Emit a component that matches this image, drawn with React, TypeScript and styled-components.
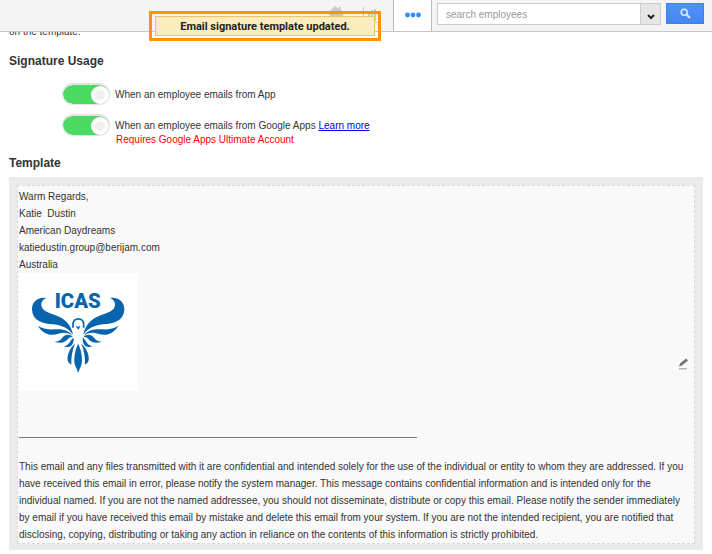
import React from "react";
import styled, { createGlobalStyle } from "styled-components";

const Global = createGlobalStyle`
  *, *::before { box-sizing: border-box; }
  body {
    margin: 0;
    background: #fff;
    color: #333;
    font: 10px/17px "Liberation Sans", Arial, sans-serif;
  }
`;

const Page = styled.div`
  position: relative;
`;

const Header = styled.header`
  display: flex;
  height: 32px;
  background: #f4f4f4;
  border-bottom: 1px solid #c8c8c8;
`;

const Nav = styled.nav`
  display: flex;
  flex: 1;
  justify-content: flex-end;
  gap: 18px;
  padding: 6px 13px 0 0;
`;

const NavButton = styled.button`
  display: flex;
  align-items: flex-start;
  height: 20px;
  padding: 0;
  border: 0;
  background: none;
  color: #c9c9c9;
`;

const MoreTab = styled.button`
  display: flex;
  align-items: center;
  justify-content: center;
  width: 39px;
  padding: 0 0 2px;
  border: 1px solid #bbb;
  border-width: 0 1px;
  background: #fff;
  color: #2d8cff;
`;

const Search = styled.form`
  display: flex;
  gap: 5px;
  height: 22px;
  margin: 3px 8px 0 5px;
`;

const SearchField = styled.div`
  display: flex;
  width: 224px;
  border: 1px solid #ccc;
  background: #fff;
`;

const SearchInput = styled.input`
  flex: 1;
  min-width: 0;
  padding: 0 8px;
  border: 0;
  background: none;
  font: 10px "Liberation Sans", Arial, sans-serif;
  &::placeholder { color: #999; }
`;

const SearchOptions = styled.button`
  display: flex;
  align-items: center;
  justify-content: center;
  width: 20px;
  padding: 6px 0 0;
  border: 0;
  border-left: 1px solid #ccc;
  background: #e6e6e6;
  color: #222;
`;

const SearchButton = styled.button`
  display: flex;
  align-items: center;
  justify-content: center;
  width: 38px;
  height: 21px;
  padding: 0;
  border: 1px solid #3b80ee;
  background: linear-gradient(#4d90fe, #4787ed);
  color: #dfeaff;
`;

const Toast = styled.div`
  position: absolute;
  top: 11px;
  left: 149px;
  padding: 2px 3px;
  border: 3px solid #ff9500;
`;

const ToastText = styled.div`
  width: 220px;
  padding-top: 1px;
  border: 1px solid #efc36a;
  background: #f9edbe;
  color: #222;
  font: bold 11px/17px Roboto, "Liberation Sans", sans-serif;
  text-align: center;
`;

const Content = styled.main`
  padding: 0 9px 4px;
`;

const Intro = styled.p`
  display: flex;
  align-items: flex-end;
  height: 8px;
  margin: 0;
  overflow: hidden;
`;

const Heading = styled.h2<{ $top: number }>`
  margin: ${(p) => p.$top}px 0 0;
  font-size: 12px;
  line-height: 18px;
`;

const Option = styled.div<{ $top: number }>`
  display: flex;
  gap: 5px;
  margin: ${(p) => p.$top}px 0 0 53px;
`;

const Toggle = styled.input`
  appearance: none;
  display: flex;
  align-items: center;
  justify-content: flex-end;
  width: 48px;
  height: 22px;
  margin: 0;
  border: 1px solid #e4e4e4;
  border-top-width: 2px;
  border-radius: 11px;
  background: #4cd964;
  background-clip: padding-box;
  &::before {
    content: "";
    width: 18px;
    height: 18px;
    border: 4px solid #fff;
    border-radius: 50%;
    background: #f0f0f0;
    box-shadow: 0 0 1px #bbb;
  }
`;

const OptionText = styled.div`
  padding-top: 5px;
  line-height: 14px;
`;

const Link = styled.a`
  color: #00e;
`;

const Warning = styled.div`
  padding-left: 1px;
  color: #f00;
`;

const Frame = styled.section`
  margin-top: 5px;
  padding: 8px 8px 6px;
  background: #ebebeb;
`;

const Editor = styled.div`
  position: relative;
  padding: 2px 4px 0 1px;
  border: 1px dashed #d8d8d8;
  background: #f9f9f9;
`;

const Line = styled.div`
  white-space: pre;
`;

const Logo = styled.svg`
  display: block;
  width: 118px;
  height: 118px;
  background: #fff;
`;

const Rule = styled.hr`
  width: 398px;
  margin: 46px 0 20px;
  border: 0;
  border-top: 1px solid #777;
`;

const Disclaimer = styled.p`
  max-width: 668px;
  margin: 0;
`;

const EditButton = styled.button`
  position: absolute;
  top: 50%;
  right: 4px;
  transform: translateY(-50%);
  display: block;
  padding: 0;
  border: 0;
  background: none;
`;

const BirdHalf = ({ mirrored = false }: { mirrored?: boolean }) => (
  <g transform={mirrored ? "matrix(-1 0 0 1 379 0)" : undefined}>
    <path d="M94 84C68 80 50 96 51 120C53 151 80 161 115 163C144 166 160 176 174 194C168 165 150 146 122 136C98 128 81 122 79 106C78 96 84 88 94 84Z" />
    <path d="M69 167C83 192 105 199 130 191C148 186 162 189 173 198C160 179 141 177 119 178C98 179 82 176 69 167Z" />
    <path d="M118 215C137 222 151 217 159 207C164 201 169 200 174 201C163 191 150 193 142 203C136 211 129 215 118 215Z" />
    <path d="M147 229C165 235 177 226 176 203C166 207 167 223 147 229Z" />
    <path d="M180 221C163 234 154 261 159 274C161 279 165 282 169 284C168 263 172 239 180 221Z" />
  </g>
);

export default function App() {
  return (
    <Page>
      <Global />
      <Header>
        <Nav>
          <NavButton aria-label="Home">
            <svg width="18" height="16" viewBox="0 0 18 16" fill="currentColor"><path d="M0 8 8 0l4 3V1h2v3l4 4-2 1v6H3V9z" /></svg>
          </NavButton>
          <NavButton aria-label="Reports">
            <svg width="17" height="18" viewBox="0 0 17 18" fill="currentColor"><path d="M0 1h1v15h16v1H0zM5 8h2v7H5zM8 4h2v11H8zM11 3h2v12h-2z" /></svg>
          </NavButton>
        </Nav>
        <MoreTab aria-label="More">
          <svg width="16" height="6" viewBox="0 0 16 6" fill="currentColor"><circle cx="2.5" cy="3" r="2.4" /><circle cx="8" cy="3" r="2.4" /><circle cx="13.5" cy="3" r="2.4" /></svg>
        </MoreTab>
        <Search>
          <SearchField>
            <SearchInput aria-label="Search employees" placeholder="search employees" />
            <SearchOptions type="button" aria-label="Search options">
              <svg width="8" height="6" viewBox="0 0 8 6" fill="none" stroke="currentColor" strokeWidth="2"><path d="m1 1 3 3 3-3" /></svg>
            </SearchOptions>
          </SearchField>
          <SearchButton type="button" aria-label="Search">
            <svg width="11" height="11" viewBox="0 0 11 11" fill="none" stroke="currentColor" strokeWidth="1.6"><circle cx="4.2" cy="4.2" r="3" /><path d="m6.4 6.4 3.6 3.6" strokeWidth="2" /></svg>
          </SearchButton>
        </Search>
      </Header>
      <Toast role="status">
        <ToastText>Email signature template updated.</ToastText>
      </Toast>
      <Content>
        <Intro>on the template.</Intro>
        <Heading $top={12}>Signature Usage</Heading>
        <Option $top={13}>
          <Toggle type="checkbox" id="app" defaultChecked />
          <OptionText><label htmlFor="app">When an employee emails from App</label></OptionText>
        </Option>
        <Option $top={9}>
          <Toggle type="checkbox" id="google" defaultChecked />
          <OptionText>
            <label htmlFor="google">When an employee emails from Google Apps</label> <Link href="#learn">Learn more</Link>
            <Warning>Requires Google Apps Ultimate Account</Warning>
          </OptionText>
        </Option>
        <Heading $top={7}>Template</Heading>
        <Frame>
          <Editor>
            <Line>Warm Regards,</Line>
            <Line>Katie  Dustin</Line>
            <Line>American Daydreams</Line>
            <Line>katiedustin.group@berijam.com</Line>
            <Line>Australia</Line>
            <Logo viewBox="12 9 354 354" fill="#0864ac" role="img" aria-label="ICAS">
              <text x="119" y="114" fontFamily="Roboto, sans-serif" fontSize="61" fontWeight="900">ICAS</text>
              <BirdHalf />
              <BirdHalf mirrored />
              <path d="M174 173V163C174 141 206 141 206 163V173" fill="none" stroke="#0864ac" strokeWidth="5" />
              <path d="M181 167 189 170 197 167 190 179Z" />
              <path d="M189.5 221C180 240 174 270 181 288Q185 296 189.5 308Q194 296 198 288C205 270 199 240 189.5 221Z" />
            </Logo>
            <Rule />
            <Disclaimer>
              This email and any files transmitted with it are confidential and intended solely for the use of the individual or entity to whom they are addressed. If you have received this email in error, please notify the system manager. This message contains confidential information and is intended only for the individual named. If you are not the named addressee, you should not disseminate, distribute or copy this email. Please notify the sender immediately by email if you have received this email by mistake and delete this email from your system. If you are not the intended recipient, you are notified that disclosing, copying, distributing or taking any action in reliance on the contents of this information is strictly prohibited.
            </Disclaimer>
            <EditButton aria-label="Edit template">
              <svg width="12" height="12" viewBox="0 0 12 12" fill="#777"><path d="m1 9 1-3 6-5 2 2-6 5zM1 11h8v1H1z" /></svg>
            </EditButton>
          </Editor>
        </Frame>
      </Content>
    </Page>
  );
}
